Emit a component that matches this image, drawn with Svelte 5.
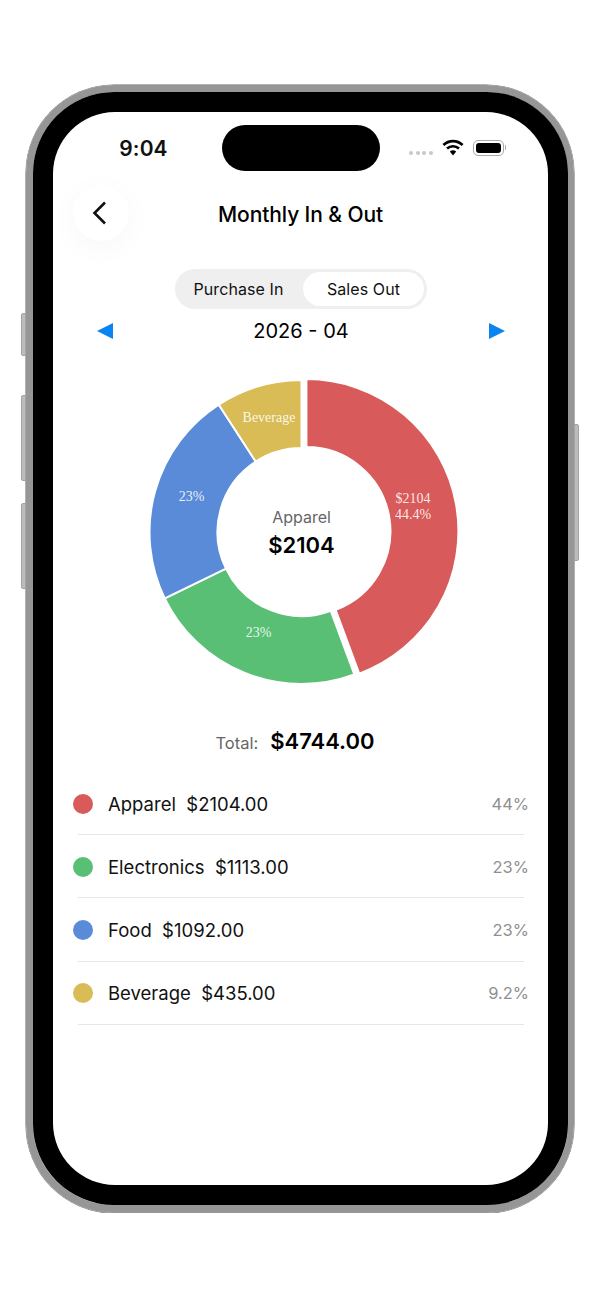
<script>
	const cx = 248.5;
	const cy = 160;
	const outer = 152;
	const inner = 84;

	const items = [
		{ name: 'Apparel', amount: 2104, pct: '44%', color: '#d85a5a', offset: 5 },
		{ name: 'Electronics', amount: 1113, pct: '23%', color: '#58bf74', offset: 0 },
		{ name: 'Food', amount: 1092, pct: '23%', color: '#5a8bd8', offset: 0 },
		{ name: 'Beverage', amount: 435, pct: '9.2%', color: '#d9bc55', offset: 0 }
	];
	const total = items.reduce((sum, item) => sum + item.amount, 0);

	function point(r, deg) {
		const a = (deg * Math.PI) / 180;
		return `${cx + r * Math.sin(a)} ${cy - r * Math.cos(a)}`;
	}

	function arc(start, end) {
		const large = end - start > 180 ? 1 : 0;
		return `M${point(outer, start)} A${outer} ${outer} 0 ${large} 1 ${point(outer, end)} L${point(inner, end)} A${inner} ${inner} 0 ${large} 0 ${point(inner, start)} Z`;
	}

	let angle = 0;
	const slices = items.map((item) => {
		const start = angle;
		angle += (item.amount / total) * 360;
		const mid = ((start + angle) / 2) * (Math.PI / 180);
		return {
			...item,
			d: arc(start, angle),
			dx: item.offset * Math.sin(mid),
			dy: -item.offset * Math.cos(mid)
		};
	});

	const labels = [
		{ x: 360, y: 131, text: '$2104' },
		{ x: 360, y: 147, text: '44.4%' },
		{ x: 205.5, y: 265, text: '23%' },
		{ x: 138.5, y: 129, text: '23%' },
		{ x: 216, y: 50, text: 'Beverage' }
	];
</script>

<div class="phone">
	<span class="side-btn left mute"></span>
	<span class="side-btn left vol-up"></span>
	<span class="side-btn left vol-down"></span>
	<span class="side-btn right power"></span>

	<div class="bezel">
		<div class="screen">
			<div class="status">
				<span class="time">9:04</span>
				<span class="island"></span>
				<div class="status-icons">
					<span class="signal"><i></i><i></i><i></i><i></i></span>
					<svg class="wifi" width="22" height="17" viewBox="0 0 22 17">
						<path d="M1.4 6a13.8 13.8 0 0 1 19.2 0" fill="none" stroke="#000" stroke-width="2.7" />
						<path d="M5 9.6a8.8 8.8 0 0 1 12 0" fill="none" stroke="#000" stroke-width="2.7" />
						<path d="M7.8 12.6 11 16.4l3.2-3.8a4.8 4.8 0 0 0-6.4 0Z" fill="#000" />
					</svg>
					<span class="battery"><i></i></span>
					<span class="battery-cap"></span>
				</div>
			</div>

			<header class="nav">
				<button class="back" aria-label="Back">
					<svg width="16" height="26" viewBox="0 0 16 26">
						<path d="M13 2.5 2.5 13 13 23.5" fill="none" stroke="#111" stroke-width="2.6" />
					</svg>
				</button>
				<h1>Monthly In &amp; Out</h1>
			</header>

			<div class="segment">
				<button class="seg">Purchase In</button>
				<button class="seg active">Sales Out</button>
			</div>

			<div class="month">
				<span class="tri prev"></span>
				<span>2026 - 04</span>
				<span class="tri next"></span>
			</div>

			<svg class="chart" width="495" height="320" viewBox="0 0 495 320">
				{#each slices as s}
					<path d={s.d} fill={s.color} stroke="#fff" stroke-width="2" transform="translate({s.dx} {s.dy})" />
				{/each}
				{#each labels as l}
					<text class="slice-label" x={l.x} y={l.y} text-anchor="middle">{l.text}</text>
				{/each}
				<text class="center-name" x={cx} y="151" text-anchor="middle">Apparel</text>
				<text class="center-value" x={cx} y="181" text-anchor="middle">$2104</text>
			</svg>

			<div class="total">
				<span class="total-label">Total:</span>
				<span class="total-value">${total}.00</span>
			</div>

			<ul class="list">
				{#each items as item}
					<li>
						<div class="row">
							<span class="dot" style="background: {item.color}"></span>
							<span class="name">{item.name}&nbsp; ${item.amount}.00</span>
							<span class="pct">{item.pct}</span>
						</div>
						<div class="divider"></div>
					</li>
				{/each}
			</ul>
		</div>
	</div>
</div>

<style>
	:global(body) {
		background: #fff;
		font-family: Inter, 'Liberation Sans', sans-serif;
		color: #000;
	}

	.phone {
		position: relative;
		box-sizing: border-box;
		width: 548px;
		height: 1128px;
		margin: 85px 0 0 26px;
		border: solid #969696;
		border-width: 7px 6px 8px 7px;
		border-radius: 88px;
		box-shadow: 0 0 0 0.5px #666;
	}

	.side-btn {
		position: absolute;
		width: 5px;
		background: #bcbcbc;
		border: 1px solid #a4a4a4;
		box-sizing: border-box;
	}

	.side-btn.left {
		left: -12px;
		border-radius: 2px 0 0 2px;
	}

	.side-btn.right {
		right: -11px;
		border-radius: 0 2px 2px 0;
	}

	.mute {
		top: 221px;
		height: 43px;
	}

	.vol-up {
		top: 303px;
		height: 86px;
	}

	.vol-down {
		top: 411px;
		height: 86px;
	}

	.power {
		top: 332px;
		height: 137px;
	}

	.bezel {
		box-sizing: border-box;
		height: 100%;
		background: #000;
		padding: 20px;
		border-radius: 81px;
	}

	.screen {
		height: 100%;
		background: #fff;
		border-radius: 62px;
		overflow: hidden;
	}

	.status {
		display: grid;
		grid-template-columns: 169px 158px 1fr;
		height: 46px;
		padding-top: 13px;
		align-items: center;
	}

	.time {
		text-align: center;
		padding-left: 12px;
		font-size: 21px;
		font-weight: 600;
		letter-spacing: 0.1px;
		color: #111;
	}

	.island {
		height: 46px;
		background: #000;
		border-radius: 23px;
	}

	.status-icons {
		display: flex;
		align-items: center;
		padding-left: 29px;
		margin-top: -1px;
	}

	.signal {
		display: flex;
		gap: 2.5px;
		margin-top: 11px;
	}

	.signal i {
		width: 4px;
		height: 4px;
		border-radius: 50%;
		background: #c8c8c8;
	}

	.wifi {
		margin-left: 9px;
	}

	.battery {
		box-sizing: border-box;
		width: 31px;
		height: 16px;
		margin-left: 9px;
		padding: 2px;
		border: 1px solid #aaa;
		border-radius: 5px;
	}

	.battery i {
		display: block;
		height: 100%;
		background: #000;
		border-radius: 3px;
	}

	.battery-cap {
		width: 1.5px;
		height: 5px;
		margin-left: 1px;
		background: #aaa;
		border-radius: 0 2px 2px 0;
	}

	.nav {
		position: relative;
		display: flex;
		justify-content: center;
		align-items: center;
		height: 56px;
		margin-top: 14px;
	}

	.back {
		position: absolute;
		left: 20px;
		top: 0;
		display: flex;
		align-items: center;
		justify-content: center;
		width: 56px;
		height: 56px;
		padding: 0 2px 0 0;
		border: none;
		border-radius: 50%;
		background: #fff;
		box-shadow: 0 6px 30px rgba(0, 0, 0, 0.035);
	}

	h1 {
		margin: 2px 0 0;
		font-size: 21px;
		font-weight: 500;
		letter-spacing: -0.1px;
		color: #000;
	}

	.segment {
		box-sizing: border-box;
		display: flex;
		width: 252px;
		height: 40px;
		margin: 28px 0 0 122px;
		padding: 3px;
		background: #efefef;
		border-radius: 20px;
	}

	.seg {
		flex: 1;
		padding: 0 4px 0 0;
		border: none;
		border-radius: 17px;
		background: transparent;
		font: inherit;
		font-size: 16px;
		letter-spacing: 0.1px;
		color: #111;
	}

	.seg.active {
		flex: 0 0 121px;
		padding: 0;
		background: #fff;
	}

	.month {
		display: flex;
		justify-content: space-between;
		align-items: center;
		height: 24px;
		margin-top: 10px;
		padding: 0 43px 0 44px;
		font-size: 20px;
		color: #000;
	}

	.tri {
		width: 0;
		height: 0;
		border-top: 8px solid transparent;
		border-bottom: 8px solid transparent;
	}

	.tri.prev {
		border-right: 16px solid #0a84f0;
	}

	.tri.next {
		border-left: 16px solid #0a84f0;
	}

	.chart {
		display: block;
		margin-top: 29px;
	}

	.slice-label {
		font-family: 'Liberation Serif', serif;
		font-size: 14px;
		fill: #fff;
		fill-opacity: 0.88;
	}

	.center-name {
		font-size: 16px;
		fill: #666;
	}

	.center-value {
		font-size: 22px;
		font-weight: 600;
		fill: #000;
	}

	.total {
		display: flex;
		justify-content: center;
		align-items: baseline;
		gap: 12px;
		margin-top: 33px;
		padding-right: 11px;
		line-height: 32px;
	}

	.total-label {
		font-size: 16.5px;
		color: #666;
	}

	.total-value {
		font-size: 22px;
		font-weight: 600;
	}

	.list {
		margin: 14px 0 0;
		padding: 0 19px 0 20px;
		list-style: none;
	}

	.row {
		display: flex;
		align-items: center;
		height: 61px;
	}

	.dot {
		width: 20px;
		height: 20px;
		border-radius: 50%;
	}

	.name {
		margin-left: 15px;
		font-size: 18.5px;
		color: #111;
	}

	.pct {
		margin-left: auto;
		font-size: 16.5px;
		color: #909090;
	}

	.divider {
		height: 1px;
		margin: 0 5px 1.3px 5px;
		background: #e6e6e6;
	}
</style>
